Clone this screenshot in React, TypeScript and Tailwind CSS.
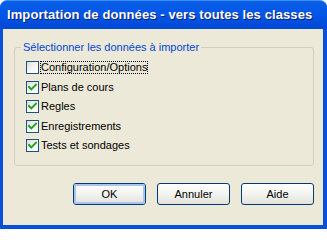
const items = [
  { label: 'Configuration/Options', checked: false, focused: true },
  { label: 'Plans de cours', checked: true },
  { label: 'Regles', checked: true },
  { label: 'Enregistrements', checked: true },
  { label: 'Tests et sondages', checked: true },
]

function CheckBox({ checked }: { checked: boolean }) {
  return (
    <div className="w-[13px] h-[13px] border border-[#1c5180] bg-gradient-to-br from-[#dcdcd7] via-[#f6f6f4] to-white flex items-center justify-center shrink-0">
      {checked && (
        <svg width="9" height="9" viewBox="0 0 9 9">
          <path d="M1 4 L3.3 6.4 L8 1.7" stroke="#21a121" strokeWidth="2" fill="none" strokeLinecap="square" />
        </svg>
      )}
    </div>
  )
}

function XpButton({ label, isDefault }: { label: string; isDefault?: boolean }) {
  return (
    <button className="w-[73px] h-[22px] rounded-[3px] border border-[#003c74] bg-gradient-to-b from-white via-[#f3f3ef] to-[#e3e2da] p-0 text-[11px] text-black">
      <div
        className={
          isDefault
            ? 'w-full h-full rounded-[2px] border-[2px] border-[#a8c4f0] flex items-center justify-center'
            : 'w-full h-full flex items-center justify-center'
        }
      >
        {label}
      </div>
    </button>
  )
}

export default function App() {
  return (
    <div
      className="w-[327px] h-[229px] flex flex-col bg-white"
      style={{ fontFamily: '"Liberation Sans", Arial, sans-serif' }}
    >
      {/* Title bar */}
      <div className="h-[29px] shrink-0 rounded-t-[7px] bg-gradient-to-b from-[#0a5fe8] via-[#0355e6] to-[#0148d4] border-t border-[#3d8bff] flex items-center pl-[7px]">
        <span className="text-white font-bold text-[13px] tracking-[0.1px] [text-shadow:1px_1px_0_#0a1e6e]">
          Importation de données - vers toutes les classes
        </span>
      </div>

      {/* Body */}
      <div className="flex-1 flex flex-col bg-[#ece9d8] border-l-[3px] border-r-[4px] border-b-[4px] border-[#0850d8]">
        {/* Group box */}
        <div className="relative mt-[18px] ml-[11px] mr-[9px] h-[119px] rounded-[3px] border border-[#d0d0bf] pl-[11px] pt-[13px]">
          <span className="absolute -top-[8px] left-[6px] px-[2px] bg-[#ece9d8] text-[11px] leading-[14px] text-[#0046d5]">
            Sélectionner les données à importer
          </span>
          <div className="flex flex-col gap-[6.5px]">
            {items.map((it) => (
              <div key={it.label} className="flex items-center h-[13px]">
                <CheckBox checked={it.checked} />
                <span
                  className={
                    it.focused
                      ? 'ml-[1px] px-[1px] text-[11px] leading-[13px] text-black outline outline-1 outline-dotted outline-black -outline-offset-1'
                      : 'ml-[1px] px-[1px] text-[11px] leading-[13px] text-black'
                  }
                >
                  {it.label}
                </span>
              </div>
            ))}
          </div>
        </div>

        {/* Buttons */}
        <div className="mt-[17px] ml-[70px] flex gap-[11px]">
          <XpButton label="OK" isDefault />
          <XpButton label="Annuler" />
          <XpButton label="Aide" />
        </div>
      </div>
    </div>
  )
}
